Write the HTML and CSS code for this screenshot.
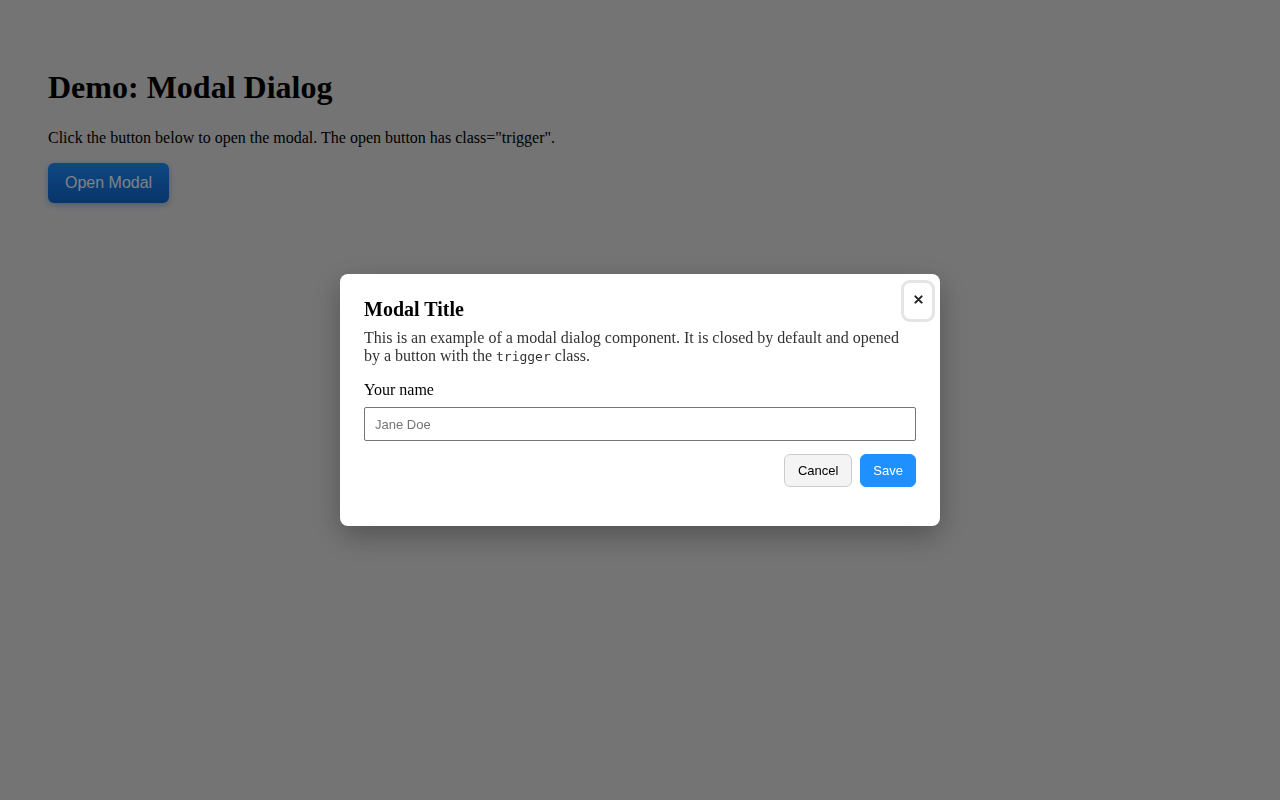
FILE: index.html
```html
<!DOCTYPE html>
<html lang="en">
<head>
<meta charset="utf-8">
<title>Demo: Modal Dialog</title>
<link rel="stylesheet" href="styles.css">
</head>
<body>
  <main class="page">
    <h1 class="page-title">Demo: Modal Dialog</h1>
    <p class="page-intro">Click the button below to open the modal. The open button has class="trigger".</p>
    <button class="trigger" type="button">Open Modal</button>
  </main>

  <div class="overlay">
    <div class="modal" role="dialog" aria-modal="true" aria-labelledby="modal-title">
      <button class="modal-close" type="button" aria-label="Close">
        <svg class="modal-close-icon" viewBox="0 0 10 10" width="9" height="9" aria-hidden="true">
          <path d="M1.5 1.5 L8.5 8.5 M8.5 1.5 L1.5 8.5" stroke="#222" stroke-width="2.2" stroke-linecap="round" fill="none"/>
        </svg>
      </button>
      <h2 class="modal-title" id="modal-title">Modal Title</h2>
      <p class="modal-text">This is an example of a modal dialog component. It is closed by default and opened by a button with the <code>trigger</code> class.</p>
      <label class="field-label" for="name">Your name</label>
      <input class="field-input" id="name" type="text" placeholder="Jane Doe">
      <div class="modal-actions">
        <button class="btn btn-secondary" type="button">Cancel</button>
        <button class="btn btn-primary" type="button">Save</button>
      </div>
    </div>
  </div>
</body>
</html>
```

FILE: styles.css
```css
html, body {
  margin: 0;
  height: 100%;
}

body {
  background: #d4d4d4;
  color: #000000;
  font-family: "Liberation Serif", "Times New Roman", serif;
  font-size: 16px;
}

.page {
  padding: 48px;
}

.page-title {
  font-size: 32px;
  font-weight: bold;
  margin: 21px 0 23px;
}

.page-intro {
  margin: 16px 0;
}

.trigger {
  font-family: "Liberation Sans", Arial, sans-serif;
  font-size: 16px;
  color: #e4ecf8;
  background: linear-gradient(#1b84ec, #0f60c2);
  border: 0;
  border-radius: 6px;
  padding: 11px 17px;
  box-shadow: 0 2px 6px rgba(20, 100, 200, 0.4);
}

/* Dimmed backdrop covering the page */
.overlay {
  position: fixed;
  inset: 0;
  background: rgba(0, 0, 0, 0.45);
  display: flex;
  align-items: center;
  justify-content: center;
}

.modal {
  position: relative;
  width: 600px;
  box-sizing: border-box;
  background: #ffffff;
  border-radius: 8px;
  padding: 24px;
  box-shadow: 0 10px 30px rgba(0, 0, 0, 0.3);
}

.modal-close {
  position: absolute;
  top: 6px;
  right: 5px;
  width: 34px;
  height: 42px;
  box-sizing: border-box;
  background: #ffffff;
  border: 3px solid #e4e4e4;
  border-radius: 9px;
  padding: 0 0 3px;
  display: flex;
  align-items: center;
  justify-content: center;
}

.modal-close-icon {
  display: block;
}

.modal-title {
  font-size: 20px;
  font-weight: bold;
  margin: 0 0 8px;
  line-height: 23px;
}

.modal-text {
  margin: 0;
  color: #333333;
  line-height: 18px;
}

.modal-text code {
  font-family: "DejaVu Sans Mono", "Liberation Mono", monospace;
  font-size: 13px;
  line-height: 1;
}

.field-label {
  display: block;
  margin: 16px 0 8px;
  line-height: 18px;
}

.field-input {
  display: block;
  width: 100%;
  box-sizing: border-box;
  height: 34px;
  padding: 0 10px;
  border: 1px solid #767676;
  border-radius: 2px;
  font-family: "Liberation Sans", Arial, sans-serif;
  font-size: 13px;
}

.field-input::placeholder {
  color: #757575;
}

.modal-actions {
  display: flex;
  justify-content: flex-end;
  gap: 8px;
  margin: 13px 0 15px;
}

.btn {
  font-family: "Liberation Sans", Arial, sans-serif;
  font-size: 13px;
  line-height: 15px;
  padding: 8px 12px;
  border-radius: 6px;
}

.btn-secondary {
  background: #f4f4f4;
  border: 1px solid #cccccc;
  color: #000000;
  padding: 8px 13px;
}

.btn-primary {
  background: #1e90ff;
  border: 1px solid #1e90ff;
  color: #ffffff;
}
```
